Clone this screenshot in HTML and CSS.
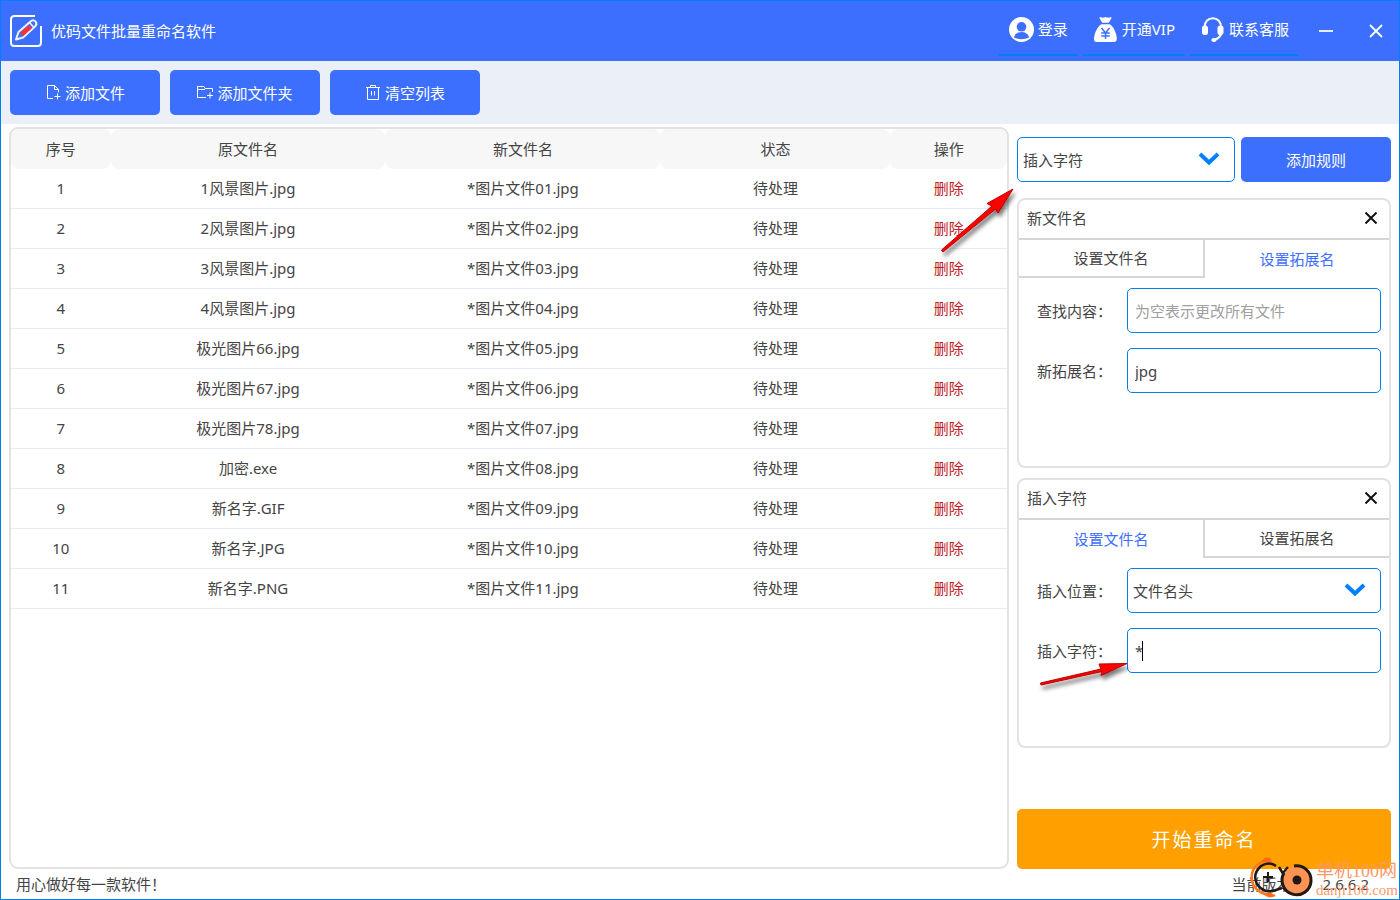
FILE: index.html
```html
<!DOCTYPE html>
<html lang="zh-CN">
<head>
<meta charset="utf-8">
<title>优码文件批量重命名软件</title>
<link rel="stylesheet" href="styles.css">
</head>
<body>
<div class="window">
  <header class="titlebar">
    <svg class="logo" viewBox="0 0 32 32" fill="none">
      <path d="M25 1H4.500Q1 1 1 4.500V27.500Q1 31 4.500 31H27.500Q31 31 31 27.500V11" stroke="#fff" stroke-width="2"/>
      <path d="M6 24.500L8.500 17L20.500 6.500Q23 4 25.500 6.500Q27.500 9 25 11.500L13 22.500Z" stroke="#eef2ff" stroke-width="2" stroke-linejoin="round"/>
      <path d="M11.500 19.500L20.500 11.500" stroke="#f03538" stroke-width="4.500"/>
      <path d="M19.500 7.500L23.500 12" stroke="#eef2ff" stroke-width="1.500"/>
    </svg>
    <h1 class="title">优码文件批量重命名软件</h1>
    <nav class="account">
      <a class="account-link" href="#">
        <svg class="account-icon" viewBox="0 0 25 25"><circle cx="12.500" cy="12.500" r="12.500" fill="#fff"/><circle cx="12.500" cy="9.800" r="4.800" fill="#3d6fff"/><path d="M4.800 20.500Q6.500 15 12.500 15Q18.500 15 20.200 20.500Q12.500 24 4.800 20.500Z" fill="#3d6fff"/></svg>
        登录</a>
      <a class="account-link" href="#">
        <svg class="account-icon" viewBox="0 0 25 25"><path d="M6.500 1.200Q6 0 7.500 0Q9.500 1.500 12.500 0Q15.500 1.500 17.500 0Q19 0 18.300 1.500L15.800 5.800H9.200Z" fill="#fff"/><path d="M8.500 7.200H16.500C20 9 23.500 15 23.800 21.500Q24 25 20.500 25H4Q.5 25 1 21.500C1.500 15 5 9 8.500 7.200Z" fill="#fff"/><path d="M8.500 11L12.500 16L16.500 11M12.500 16V22M8.200 16H16.800M8.200 19H16.800" fill="none" stroke="#3d6fff" stroke-width="1.500"/></svg>
        开通VIP</a>
      <a class="account-link" href="#">
        <svg class="account-icon" viewBox="0 0 25 25"><path d="M4.500 12V10.500C4.500 5 8 1.200 12.800 1.200S21.200 5 21.200 10.500V16Q20.500 21.500 14 22.500" fill="none" stroke="#fff" stroke-width="2"/><rect x="2" y="8.500" width="6" height="9.500" rx="2.800" fill="#fff"/><rect x="17.500" y="8.500" width="6" height="9.500" rx="2.800" fill="#fff"/><ellipse cx="14" cy="23" rx="2.700" ry="1.900" fill="#fff"/></svg>
        联系客服</a>
    </nav>
    <div class="window-buttons">
      <button class="window-button" aria-label="最小化"><svg viewBox="0 0 14 14"><path d="M0 7H14" stroke="#e6ecff" stroke-width="2"/></svg></button>
      <button class="window-button" aria-label="关闭"><svg viewBox="0 0 14 14"><path d="M1 1L13 13M13 1L1 13" stroke="#fff" stroke-width="1.800"/></svg></button>
    </div>
  </header>

  <div class="toolbar">
    <button class="button">
      <svg class="button-icon" viewBox="0 0 16 16"><path d="M8 13.500H2.500V.5H9.500L13.500 4.500V7.500M9.500 .5V4.500H13.500M12.500 8.500V14.500M9.500 11.500H15.500"/></svg>添加文件</button>
    <button class="button">
      <svg class="button-icon" viewBox="0 0 16 16"><path d="M9 12.500H.5V1.500H7L8 3.500H15.500V7M.5 4.500H8M13 7.500V13.500M10 10.500H16"/></svg>添加文件夹</button>
    <button class="button">
      <svg class="button-icon" viewBox="0 0 16 16"><path d="M1 2.500H15M5.500 2.500V.5H10.500V2.500M2.500 2.500V14.500H13.500V2.500M6.500 6V10.500M9.500 6V10.500"/></svg>清空列表</button>
  </div>

  <main class="content">
    <section class="file-list">
      <table class="files">
        <colgroup><col class="col-index"><col class="col-name"><col class="col-name"><col class="col-state"><col class="col-action"></colgroup>
        <thead><tr><th>序号</th><th>原文件名</th><th>新文件名</th><th>状态</th><th>操作</th></tr></thead>
        <tbody>
          <tr><td>1</td><td>1风景图片.jpg</td><td>*图片文件01.jpg</td><td>待处理</td><td><button class="remove">删除</button></td></tr>
          <tr><td>2</td><td>2风景图片.jpg</td><td>*图片文件02.jpg</td><td>待处理</td><td><button class="remove">删除</button></td></tr>
          <tr><td>3</td><td>3风景图片.jpg</td><td>*图片文件03.jpg</td><td>待处理</td><td><button class="remove">删除</button></td></tr>
          <tr><td>4</td><td>4风景图片.jpg</td><td>*图片文件04.jpg</td><td>待处理</td><td><button class="remove">删除</button></td></tr>
          <tr><td>5</td><td>极光图片66.jpg</td><td>*图片文件05.jpg</td><td>待处理</td><td><button class="remove">删除</button></td></tr>
          <tr><td>6</td><td>极光图片67.jpg</td><td>*图片文件06.jpg</td><td>待处理</td><td><button class="remove">删除</button></td></tr>
          <tr><td>7</td><td>极光图片78.jpg</td><td>*图片文件07.jpg</td><td>待处理</td><td><button class="remove">删除</button></td></tr>
          <tr><td>8</td><td>加密.exe</td><td>*图片文件08.jpg</td><td>待处理</td><td><button class="remove">删除</button></td></tr>
          <tr><td>9</td><td>新名字.GIF</td><td>*图片文件09.jpg</td><td>待处理</td><td><button class="remove">删除</button></td></tr>
          <tr><td>10</td><td>新名字.JPG</td><td>*图片文件10.jpg</td><td>待处理</td><td><button class="remove">删除</button></td></tr>
          <tr><td>11</td><td>新名字.PNG</td><td>*图片文件11.jpg</td><td>待处理</td><td><button class="remove">删除</button></td></tr>
        </tbody>
      </table>
    </section>

    <aside class="rules">
      <div class="add-rule">
        <div class="picker">
          <select class="field" aria-label="规则类型"><option>插入字符</option><option>新文件名</option></select>
          <svg class="chevron" viewBox="0 0 22 14"><path d="M2 2L11 10.500L20 2"/></svg>
        </div>
        <button class="button">添加规则</button>
      </div>

      <section class="rule">
        <div class="rule-head"><h2 class="rule-title">新文件名</h2>
          <button class="close" aria-label="移除规则"><svg viewBox="0 0 12 12"><path d="M.5 .5L11.500 11.500M11.500 .5L.5 11.500"/></svg></button></div>
        <div class="tabs"><button class="tab tab-left">设置文件名</button><button class="tab tab-active">设置拓展名</button></div>
        <div class="form">
          <label class="label" for="find">查找内容：</label>
          <input class="field" id="find" type="text" placeholder="为空表示更改所有文件">
          <label class="label" for="ext">新拓展名：</label>
          <input class="field" id="ext" type="text" value="jpg">
        </div>
      </section>

      <section class="rule">
        <div class="rule-head"><h2 class="rule-title">插入字符</h2>
          <button class="close" aria-label="移除规则"><svg viewBox="0 0 12 12"><path d="M.5 .5L11.500 11.500M11.500 .5L.5 11.500"/></svg></button></div>
        <div class="tabs"><button class="tab tab-active">设置文件名</button><button class="tab tab-right">设置拓展名</button></div>
        <div class="form">
          <label class="label" for="place">插入位置：</label>
          <div class="picker">
            <select class="field" id="place"><option>文件名头</option><option>文件名尾</option></select>
            <svg class="chevron" viewBox="0 0 22 14"><path d="M2 2L11 10.500L20 2"/></svg>
          </div>
          <label class="label" for="chars">插入字符：</label>
          <div class="picker"><input class="field" id="chars" type="text" value="*"><span class="caret"></span></div>
        </div>
      </section>

      <button class="start">开始重命名</button>
    </aside>
  </main>

  <footer class="status"><span>用心做好每一款软件！</span><span class="version"><span>当前版本：</span><span>2.6.6.2</span></span></footer>

  <svg class="arrow arrow-rule" viewBox="0 0 80 72"><path d="M4.500 65L55 21L50 18.500L76 4L61 28L58.500 24L6 67Z"/></svg>
  <svg class="arrow arrow-chars" viewBox="0 0 96 34"><path d="M5.500 25L66 11L64 6L92 5.500L66 17.500L67 13.500L6 27Z"/></svg>

  <div class="watermark">
    <svg class="watermark-logo" viewBox="0 0 64 42" fill="none">
      <path d="M22 4Q5 3 2 17Q0 32 15 37Q20 41 25 38" stroke="#ff7a1c" stroke-width="2.500"/>
      <path d="M11 5Q16 -2 21 2L20 5ZM14 37Q22 42 24 38L20 35Z" fill="#ff6a10"/>
      <path d="M26 9Q19 4 11 9Q2 17 7 27Q13 36 23 34L32 31M29 10L35 20M38 10L33 16" stroke="#221815" stroke-width="2.500"/>
      <path d="M13 20H23M18 15V25" stroke="#221815" stroke-width="2"/>
      <circle cx="47" cy="23" r="14" fill="#ff9354"/>
      <path d="M44 9A14.500 14.500 0 1 1 34 16" stroke="#221815" stroke-width="3"/>
      <circle cx="47" cy="23" r="4.500" fill="#221815"/>
    </svg>
    <div class="watermark-text"><span class="watermark-name">单机100网</span><span class="watermark-site">danji100.com</span></div>
  </div>
</div>
</body>
</html>
```

FILE: styles.css
```css
* { box-sizing: border-box; }

body {
  margin: 0;
  color: #444;
  font: 15px/20px "Noto Sans", "Noto Sans CJK SC", sans-serif;
}

button, input, select { font: inherit; color: inherit; }
button { border: 0; padding: 0; background: none; cursor: pointer; }
h1, h2 { margin: 0; font: inherit; }
svg { display: block; }

.window {
  position: relative;
  display: flex;
  flex-direction: column;
  min-height: 100vh;
  border: 1px solid #0080f0;
  background: #fff;
  overflow: hidden;
}

.titlebar {
  display: flex;
  align-items: center;
  height: 60px;
  padding-left: 9px;
  background: #3d6fff;
  color: #fff;
}
.logo { width: 32px; height: 32px; }
.title { margin-left: 9px; }
.account { display: flex; gap: 5px; margin-left: auto; }
.account-link {
  display: flex;
  align-items: center;
  gap: 4px;
  height: 50px;
  padding: 0 10px 2px;
  border-bottom: 2px solid #0080f0;
  color: inherit;
  text-decoration: none;
}
.account-icon { width: 25px; height: 25px; }
.window-buttons { display: flex; gap: 4px; padding-left: 4px; }
.window-button { display: grid; place-items: center; width: 46px; height: 50px; }
.window-button svg { width: 14px; height: 14px; }

.toolbar { display: flex; gap: 10px; padding: 9px; background: #ebeff8; }
.button {
  display: flex;
  align-items: center;
  justify-content: center;
  gap: 4px;
  width: 150px;
  height: 45px;
  border-radius: 5px;
  background: #3d6fff;
  color: #fff;
}
.button-icon { width: 16px; height: 16px; fill: none; stroke: #fff; stroke-width: 1; }

.content { display: flex; flex: 1; gap: 8px; padding: 3px 8px 0; }

.file-list {
  flex: 1;
  min-width: 0;
  border: 2px solid #e2e2e2;
  border-radius: 9px;
  overflow: hidden;
}
.files { width: 100%; table-layout: fixed; border-collapse: separate; border-spacing: 0; text-align: center; }
.col-index { width: 10%; }
.col-name { width: 27.6%; }
.col-state { width: 23.1%; }
.files th, .files td { height: 40px; padding: 0; font-weight: 400; }
.files th { border-radius: 8px; background: #f7f7f7; }
.files td { padding-bottom: 2px; border-bottom: 1px solid #e1edf9; }
.remove { color: #c01c28; }

.rules { display: flex; flex-direction: column; gap: 10px; width: 374px; padding-top: 10px; }
.add-rule { display: flex; gap: 6px; margin-bottom: 6px; }
.add-rule .picker { flex: 1; }

.field {
  width: 100%;
  height: 45px;
  padding: 0 7px;
  border: 1px solid #0080f0;
  border-radius: 5px;
  background: #fff;
  outline: 0;
}
.field::placeholder { color: #a0a0a0; opacity: 1; }
select.field { appearance: none; padding: 0 5px; }
.picker { position: relative; }
.chevron {
  position: absolute;
  top: 15px;
  right: 15px;
  width: 22px;
  height: 14px;
  fill: none;
  stroke: #0080ff;
  stroke-width: 4;
  pointer-events: none;
}
.caret { position: absolute; top: 13px; left: 15px; width: 1px; height: 20px; background: #000; }

.rule { height: 270px; border: 2px solid #e2e2e2; border-radius: 8px; }
.rule-head {
  display: flex;
  align-items: center;
  justify-content: space-between;
  height: 40px;
  padding: 0 12px 2px 8px;
  border-bottom: 2px solid #d6d6d6;
}
.close svg { width: 12px; height: 12px; stroke: #111; stroke-width: 2; }
.tabs { display: flex; }
.tab { flex: 1; height: 38px; border: 0 solid #d6d6d6; border-bottom-width: 2px; }
.tab-left { border-right-width: 2px; }
.tab-right { border-left-width: 2px; }
.tab-active { padding-top: 2px; border-bottom-color: transparent; color: #3d6fff; }
.form {
  display: grid;
  grid-template-columns: 90px 1fr;
  align-items: center;
  row-gap: 15px;
  padding: 10px 8px 0 18px;
}

.start {
  height: 60px;
  margin-top: auto;
  padding-top: 2px;
  border-radius: 5px;
  background: #ffa000;
  color: #fff;
  font-size: 19px;
  letter-spacing: 2px;
}

.status { display: flex; align-items: center; justify-content: space-between; height: 30px; padding: 0 30px 0 15px; }
.version { display: flex; gap: 16px; }

.arrow { position: absolute; fill: #f00; stroke: #b00; stroke-width: 1; filter: drop-shadow(2px 4px 2px #0008); pointer-events: none; }
.arrow-rule { top: 184px; left: 936px; width: 80px; height: 72px; }
.arrow-chars { top: 657px; left: 1034px; width: 96px; height: 34px; }

.watermark { position: absolute; right: 1px; bottom: 0; display: flex; align-items: flex-end; gap: 2px; color: #ff9868; }
.watermark-logo { width: 64px; height: 42px; }
.watermark-text { display: flex; flex-direction: column; }
.watermark-name { font: 18px/20px "Liberation Serif", "Noto Sans CJK SC", serif; }
.watermark-site { font: 15px/18px "Liberation Serif", serif; }
```
